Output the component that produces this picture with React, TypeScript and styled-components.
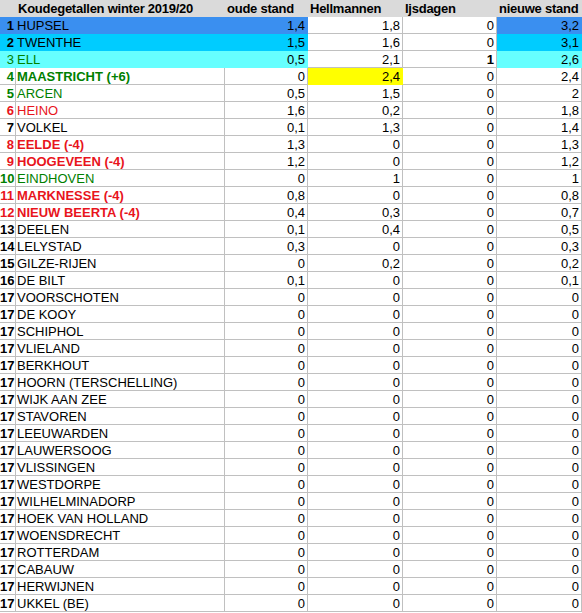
import React from "react";
import styled, { createGlobalStyle, css } from "styled-components";

const Global = createGlobalStyle`
  html, body { margin: 0; padding: 0; background: #ffffff; }
  body { font-family: "Liberation Sans", Arial, sans-serif; }
`;

const GRID = "#c0c0c0";
const GREEN = "#008000";
const RED = "#e8141c";
const BLUE = "#3a8ff0";
const CYAN = "#00ccff";
const LIGHT = "#66ffff";
const YELLOW = "#ffff00";
const HEAD = "#dadada";

const Sheet = styled.div`
  display: flex;
  flex-direction: column;
  width: 582px;
`;

const Row = styled.div`
  display: grid;
  grid-template-columns: 16px 209px 83px 95px 94px 85px;
  height: 17px;
`;

const Cell = styled.div<{
  $fill?: string;
  $align?: "left" | "right";
  $bold?: boolean;
  $color?: string;
  $head?: boolean;
}>`
  box-sizing: border-box;
  height: 17px;
  overflow: visible;
  white-space: nowrap;
  font-size: 13px;
  line-height: 16px;
  padding-top: 1px;
  color: ${(p) => p.$color ?? "#000"};
  font-weight: ${(p) => (p.$bold ? 700 : 400)};
  text-align: ${(p) => p.$align ?? "left"};
  padding-left: ${(p) => (p.$align === "right" ? 0 : 1)}px;
  padding-right: ${(p) => (p.$align === "right" ? 2 : 0)}px;
  background: ${(p) => p.$fill ?? "#fff"};
  border-right: 1px solid ${(p) => p.$fill ?? GRID};
  border-bottom: 1px solid ${(p) => p.$fill ?? GRID};
  ${(p) =>
    p.$head &&
    css`
      padding-left: 2px;
      letter-spacing: -0.25px;
    `}
`;

const RankCell = styled(Cell)`
  padding-right: 1px;
`;

type Tone = "black" | "green" | "red";
type Entry = {
  rank: number;
  name: string;
  tone: Tone;
  rankBold: boolean;
  nameBold: boolean;
  oud: string;
  hell: string;
  ijs: string;
  nieuw: string;
};

const toneColor: Record<Tone, string> = { black: "#000", green: GREEN, red: RED };

const top: Entry[] = [
  { rank: 1, name: "HUPSEL", tone: "black", rankBold: true, nameBold: false, oud: "1,4", hell: "1,8", ijs: "0", nieuw: "3,2" },
  { rank: 2, name: "TWENTHE", tone: "black", rankBold: true, nameBold: false, oud: "1,5", hell: "1,6", ijs: "0", nieuw: "3,1" },
  { rank: 3, name: "ELL", tone: "green", rankBold: false, nameBold: false, oud: "0,5", hell: "2,1", ijs: "1", nieuw: "2,6" },
  { rank: 4, name: "MAASTRICHT (+6)", tone: "green", rankBold: true, nameBold: true, oud: "0", hell: "2,4", ijs: "0", nieuw: "2,4" },
  { rank: 5, name: "ARCEN", tone: "green", rankBold: true, nameBold: false, oud: "0,5", hell: "1,5", ijs: "0", nieuw: "2" },
  { rank: 6, name: "HEINO", tone: "red", rankBold: true, nameBold: false, oud: "1,6", hell: "0,2", ijs: "0", nieuw: "1,8" },
  { rank: 7, name: "VOLKEL", tone: "black", rankBold: true, nameBold: false, oud: "0,1", hell: "1,3", ijs: "0", nieuw: "1,4" },
  { rank: 8, name: "EELDE (-4)", tone: "red", rankBold: true, nameBold: true, oud: "1,3", hell: "0", ijs: "0", nieuw: "1,3" },
  { rank: 9, name: "HOOGEVEEN (-4)", tone: "red", rankBold: true, nameBold: true, oud: "1,2", hell: "0", ijs: "0", nieuw: "1,2" },
  { rank: 10, name: "EINDHOVEN", tone: "green", rankBold: true, nameBold: false, oud: "0", hell: "1", ijs: "0", nieuw: "1" },
  { rank: 11, name: "MARKNESSE (-4)", tone: "red", rankBold: true, nameBold: true, oud: "0,8", hell: "0", ijs: "0", nieuw: "0,8" },
  { rank: 12, name: "NIEUW BEERTA (-4)", tone: "red", rankBold: true, nameBold: true, oud: "0,4", hell: "0,3", ijs: "0", nieuw: "0,7" },
  { rank: 13, name: "DEELEN", tone: "black", rankBold: true, nameBold: false, oud: "0,1", hell: "0,4", ijs: "0", nieuw: "0,5" },
  { rank: 14, name: "LELYSTAD", tone: "black", rankBold: true, nameBold: false, oud: "0,3", hell: "0", ijs: "0", nieuw: "0,3" },
  { rank: 15, name: "GILZE-RIJEN", tone: "black", rankBold: true, nameBold: false, oud: "0", hell: "0,2", ijs: "0", nieuw: "0,2" },
  { rank: 16, name: "DE BILT", tone: "black", rankBold: true, nameBold: false, oud: "0,1", hell: "0", ijs: "0", nieuw: "0,1" },
];

const rest = [
  "VOORSCHOTEN", "DE KOOY", "SCHIPHOL", "VLIELAND", "BERKHOUT", "HOORN (TERSCHELLING)",
  "WIJK AAN ZEE", "STAVOREN", "LEEUWARDEN", "LAUWERSOOG", "VLISSINGEN", "WESTDORPE",
  "WILHELMINADORP", "HOEK VAN HOLLAND", "WOENSDRECHT", "ROTTERDAM", "CABAUW", "HERWIJNEN", "UKKEL (BE)",
];

const entries: Entry[] = [
  ...top,
  ...rest.map((name) => ({
    rank: 17, name, tone: "black" as Tone, rankBold: true, nameBold: false,
    oud: "0", hell: "0", ijs: "0", nieuw: "0",
  })),
];

const rowFill = [BLUE, CYAN, LIGHT];

export default function App() {
  return (
    <>
      <Global />
      <Sheet>
        <Row>
          <Cell $fill={HEAD} />
          <Cell $fill={HEAD} $bold $head>Koudegetallen winter 2019/20</Cell>
          <Cell $fill={HEAD} $bold $head>oude stand</Cell>
          <Cell $fill={HEAD} $bold $head>Hellmannen</Cell>
          <Cell $fill={HEAD} $bold $head>Ijsdagen</Cell>
          <Cell $fill={HEAD} $bold $head>nieuwe stand</Cell>
        </Row>
        {entries.map((e, i) => {
          const fill = rowFill[i];
          const c = toneColor[e.tone];
          return (
            <Row key={i}>
              <RankCell $fill={fill} $align="right" $bold={e.rankBold} $color={c}>{e.rank}</RankCell>
              <Cell $fill={fill} $bold={e.nameBold} $color={c}>{e.name}</Cell>
              <Cell $fill={fill} $align="right">{e.oud}</Cell>
              <Cell $fill={e.rank === 4 ? YELLOW : undefined} $align="right">{e.hell}</Cell>
              <Cell $align="right" $bold={e.ijs !== "0"}>{e.ijs}</Cell>
              <Cell $fill={fill} $align="right">{e.nieuw}</Cell>
            </Row>
          );
        })}
      </Sheet>
    </>
  );
}
